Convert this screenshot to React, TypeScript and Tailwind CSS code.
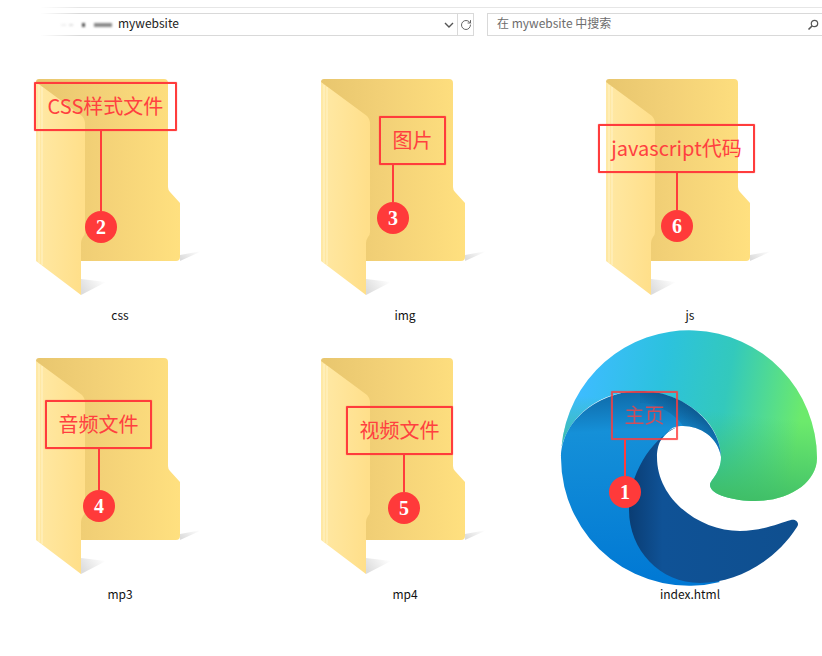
import { RotateCw } from 'lucide-react';

type Note = {
  text: string;
  num: string;
  left: number;
  top: number;
  width: number;
  lineX: number;
  lineH: number;
};

// left/top are relative to the tile
const tiles: { name: string; edge?: boolean; note: Note }[] = [
  { name: 'css', note: { text: 'CSS样式文件', num: '2', left: 34, top: 3, width: 143, lineX: 67, lineH: 80 } },
  { name: 'img', note: { text: '图片', num: '3', left: 94, top: 37, width: 67, lineX: 14, lineH: 37 } },
  { name: 'js', note: { text: 'javascript代码', num: '6', left: 28, top: 45, width: 157, lineX: 79, lineH: 37 } },
  { name: 'mp3', note: { text: '音频文件', num: '4', left: 45, top: 42, width: 107, lineX: 54, lineH: 41 } },
  { name: 'mp4', note: { text: '视频文件', num: '5', left: 61, top: 48, width: 107, lineX: 58, lineH: 37 } },
  { name: 'index.html', edge: true, note: { text: '主页', num: '1', left: 41, top: 33, width: 67, lineX: 14, lineH: 36 } },
];

function FolderIcon({ id }: { id: string }) {
  return (
    <svg width="170" height="220" viewBox="0 0 170 220" className="block">
      <defs>
        <linearGradient id={`${id}-back`} x1="0" x2="1" y1="0" y2="0">
          <stop offset="0" stopColor="#e8c66e" />
          <stop offset="0.45" stopColor="#f3d177" />
          <stop offset="1" stopColor="#ffe07f" />
        </linearGradient>
        <linearGradient id={`${id}-flap`} x1="0" x2="1" y1="0" y2="0.12">
          <stop offset="0" stopColor="#ffe9a6" />
          <stop offset="1" stopColor="#ffdf8a" />
        </linearGradient>
        <linearGradient id={`${id}-sh1`} x1="0" x2="1" y1="0.7" y2="0.2">
          <stop offset="0" stopColor="#dcdcdc" />
          <stop offset="1" stopColor="#ffffff" />
        </linearGradient>
      </defs>
      <polygon points="144,182 166,172 144,176" fill={`url(#${id}-sh1)`} />
      <polygon points="45,216 70,203 45,200" fill={`url(#${id}-sh1)`} />
      <path
        d="M3 0H128a4 4 0 0 1 4 4V108q0 3 2 5L144 124V178a4 4 0 0 1-4 4H40V60L0 30V3a3 3 0 0 1 3-3Z"
        fill={`url(#${id}-back)`}
      />
      <path
        d="M0 3L46 37Q49 40 49 45V153Q49 156 47 158Q45 161 45 164V216L0 182Z"
        fill={`url(#${id}-flap)`}
      />
      <path d="M3 6V184M6 8V186" stroke="#fff3c9" strokeWidth="1" fill="none" />
    </svg>
  );
}

function EdgeIcon() {
  const top =
    'M11.5 122A128 128 0 0 1 267 133C267 157 240 176 205 176C185 176 160 170 160 160C160 155 171 148 171 132C171 95 130 66 90 66C50 66 20 90 11.5 122Z';
  return (
    <svg width="272" height="280" viewBox="0 0 272 280" className="block">
      <defs>
        <linearGradient id="edge-top" gradientUnits="userSpaceOnUse" x1="30" y1="60" x2="250" y2="100">
          <stop offset="0" stopColor="#3dbcff" />
          <stop offset="0.35" stopColor="#2cc2de" />
          <stop offset="0.65" stopColor="#33c9bc" />
          <stop offset="1" stopColor="#6cea6c" />
        </linearGradient>
        <linearGradient id="edge-green" gradientUnits="userSpaceOnUse" x1="200" y1="90" x2="190" y2="176">
          <stop offset="0" stopColor="#3fc06a" stopOpacity="0" />
          <stop offset="1" stopColor="#3fbe66" />
        </linearGradient>
        <linearGradient id="edge-blue" gradientUnits="userSpaceOnUse" x1="80" y1="66" x2="90" y2="261">
          <stop offset="0" stopColor="#0f6aa8" />
          <stop offset="0.2" stopColor="#1590d8" />
          <stop offset="1" stopColor="#0078d4" />
        </linearGradient>
        <linearGradient id="edge-dark" gradientUnits="userSpaceOnUse" x1="78" y1="0" x2="250" y2="0">
          <stop offset="0" stopColor="#0a3c72" />
          <stop offset="0.2" stopColor="#0f5296" />
          <stop offset="1" stopColor="#0f4f8f" />
        </linearGradient>
        <linearGradient id="edge-crest" gradientUnits="userSpaceOnUse" x1="150" y1="80" x2="130" y2="105">
          <stop offset="0" stopColor="#0b4a7c" stopOpacity="0.85" />
          <stop offset="1" stopColor="#0b4a7c" stopOpacity="0.1" />
        </linearGradient>
      </defs>
      <path d={top} fill="url(#edge-top)" />
      <path d={top} fill="url(#edge-green)" />
      <path
        d="M90 66C135 66 171 100 171 132C168 112 150 101 133 101C127 101 123 102 120 105C105 120 100 130 100 145C100 200 150 240 170 257A128 128 0 0 1 11 133C11 95 50 66 90 66Z"
        fill="url(#edge-blue)"
      />
      <path d="M90 66C135 66 171 100 171 132C168 112 150 101 133 101C125 88 105 78 90 78Z" fill="url(#edge-crest)" />
      <path
        d="M127 102C110 108 107 122 107 132C107 175 150 206 190 206C212 206 230 198 241 195C246 194 250 198 247 202C225 236 188 258 150 258C110 258 79 225 79 185C79 150 100 115 127 102Z"
        fill="url(#edge-dark)"
      />
    </svg>
  );
}

function Callout({ note, dim }: { note: Note; dim?: boolean }) {
  return (
    <div className="absolute flex flex-col" style={{ left: note.left, top: note.top, width: note.width }}>
      <div
        className={`flex h-[49px] items-center justify-center rounded-[1px] border-2 border-[#ff3c3c] pb-[2px] text-[20px] whitespace-nowrap text-[#ff4040] shadow-[0_0_1px_#ff3c3c] ${
          dim ? 'opacity-80' : ''
        }`}
      >
        {note.text}
      </div>
      <div className="w-[2px] bg-[#ff3c3c]" style={{ marginLeft: note.lineX - 1, height: note.lineH }} />
      <div
        className="flex h-8 w-8 items-center justify-center rounded-full bg-[#ff3a3a] text-[20px] font-bold text-white [font-family:'Liberation_Serif',serif]"
        style={{ marginLeft: note.lineX - 16 }}
      >
        {note.num}
      </div>
    </div>
  );
}

export default function App() {
  return (
    <div className="h-[656px] w-[822px] overflow-hidden bg-white [font-family:'Noto_Sans_CJK_SC',sans-serif] text-[12px]">
      {/* address bar */}
      <div className="relative h-[79px]">
        <div className="h-[8px] border-b border-[#e6e6e6]" />
        <div className="mt-[5px] flex h-[23px] items-stretch">
          <div className="flex w-[474px] items-center border-y border-r border-[#d9d9d9]">
            <div className="flex w-[118px] items-center justify-end gap-[3px] pr-[6px]">
              <span className="h-[2px] w-[5px] bg-[#e5e5e5] blur-[1px]" />
              <span className="h-[2px] w-[4px] bg-[#d8d8d8] blur-[1px]" />
              <span className="mx-[6px] h-[4px] w-[3px] bg-[#555] blur-[1px]" />
              <span className="h-[4px] w-[18px] bg-[#8a8a8a] blur-[1px]" />
            </div>
            <span className="flex-1 pb-[3px] text-[12px] leading-none text-[#222]">mywebsite</span>
            <svg width="10" height="6" viewBox="0 0 10 6" className="mr-[3px]">
              <path d="M1 1L5 5L9 1" stroke="#555" strokeWidth="1.4" fill="none" />
            </svg>
            <div className="flex h-full w-[16px] items-center justify-center border-l border-[#d9d9d9]">
              <RotateCw size={12} className="text-[#666]" />
            </div>
          </div>
          <div className="ml-[13px] flex flex-1 items-center justify-between border-y border-l border-[#d9d9d9] pr-[3px] pl-[9px]">
            <span className="pb-[3px] text-[12px] leading-none text-[#6d6d6d]">在 mywebsite 中搜索</span>
            <svg width="12" height="12" viewBox="0 0 12 12">
              <circle cx="7.5" cy="4.5" r="3.2" stroke="#555" strokeWidth="1.2" fill="none" />
              <path d="M5 7L1.5 10.5" stroke="#555" strokeWidth="1.6" />
            </svg>
          </div>
        </div>
        {/* the left end of the bar was blurred out */}
        <div className="absolute top-0 left-0 h-[45px] w-[80px] bg-gradient-to-r from-white from-50% to-transparent" />
      </div>

      {/* file tiles */}
      <div className="grid grid-cols-[repeat(3,240px)] gap-x-[45px]">
        {tiles.map((t, i) => (
          <div key={t.name} className="relative flex h-[279px] flex-col">
            <div className="h-[229px]">
              {t.edge ? (
                <div className="absolute top-[-33px] left-[-20px]">
                  <EdgeIcon />
                </div>
              ) : (
                <div className="ml-[36px]">
                  <FolderIcon id={`f${i}`} />
                </div>
              )}
            </div>
            <div className="relative text-center leading-[14px] text-[#111]">{t.name}</div>
            <Callout dim={t.edge} note={t.note} />
          </div>
        ))}
      </div>
    </div>
  );
}
